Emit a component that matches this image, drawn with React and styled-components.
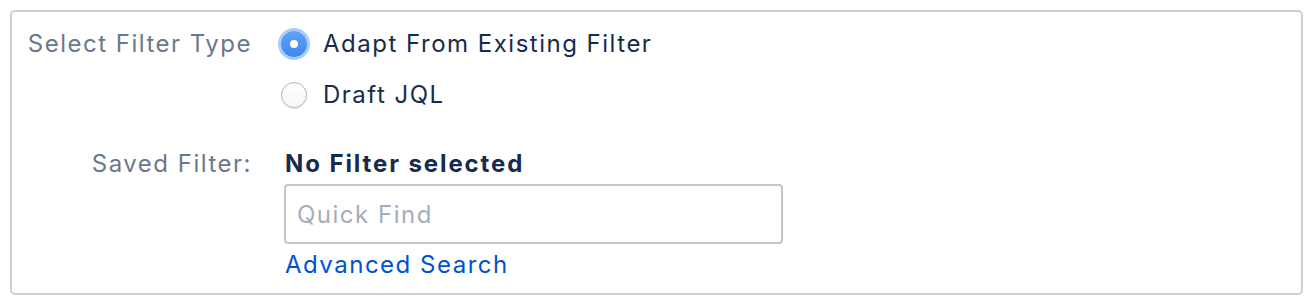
import React from "react";
import styled, { createGlobalStyle } from "styled-components";

const Global = createGlobalStyle`
  html, body { margin: 0; padding: 0; background: #fff; }
  body { font-family: Inter, "Liberation Sans", sans-serif; }
  * { box-sizing: border-box; }
`;

const Panel = styled.div`
  margin: 10px 10px 0 10px;
  width: 1293px;
  height: 285px;
  border: 2px solid #cfcfcf;
  border-radius: 5px;
  padding: 6px 0 0 0;
  display: grid;
  grid-template-columns: 240px 1fr;
  column-gap: 28px;
  align-content: start;
  font-size: 24px;
  letter-spacing: 1.5px;
  color: #172b4d;
`;

const Label = styled.div`
  text-align: right;
  color: #6b778c;
  line-height: ${(p) => p.$lh || 34}px;
  margin-top: ${(p) => p.$mt || 0}px;
`;

const Field = styled.div`
  display: flex;
  flex-direction: column;
  align-items: flex-start;
  margin-top: ${(p) => p.$mt || 0}px;
`;

const RadioRow = styled.label`
  display: flex;
  align-items: center;
  height: 51px;
  line-height: 51px;
  gap: 16px;
  color: #172b4d;
  cursor: pointer;
`;

const RadioDot = styled.span`
  position: relative;
  flex: none;
  width: 26px;
  height: 26px;
  margin-left: 1px;
  margin-top: 1px;
  border-radius: 50%;
  ${(p) =>
    p.$checked
      ? `
    background: linear-gradient(#5da2f5, #3f87ee);
    box-shadow: 0 0 0 3px #a9cbf8;
    &::after {
      content: "";
      position: absolute;
      left: 50%;
      top: 50%;
      width: 8px;
      height: 8px;
      margin: -4px 0 0 -4px;
      border-radius: 50%;
      background: #fff;
    }
  `
      : `
    background: linear-gradient(#ffffff, #f6f6f6);
    border: 1px solid #b7b7b7;
    box-shadow: 0 1px 1px rgba(0,0,0,0.12);
  `}
`;

const Value = styled.div`
  font-weight: 700;
  letter-spacing: 1.9px;
  line-height: 34px;
  margin-left: 5px;
  color: #172b4d;
`;

const Input = styled.input`
  width: 499px;
  height: 60px;
  margin-top: 3px;
  margin-left: 4px;
  border: 2px solid #c1c7d0;
  border-radius: 4px;
  padding: 0 11px;
  font-family: inherit;
  font-size: 24px;
  letter-spacing: 1.5px;
  color: #172b4d;
  outline: none;
  &::placeholder { color: #a5adba; }
`;

const Link = styled.a`
  margin-top: 4px;
  margin-left: 5px;
  line-height: 34px;
  color: #0052cc;
  text-decoration: none;
`;

export default function App() {
  return (
    <>
      <Global />
      <Panel>
        <Label $lh={51}>Select Filter Type</Label>
        <Field>
          <RadioRow>
            <RadioDot $checked />
            Adapt From Existing Filter
          </RadioRow>
          <RadioRow>
            <RadioDot />
            Draft JQL
          </RadioRow>
        </Field>
        <Label $mt={27}>Saved Filter:</Label>
        <Field $mt={27}>
          <Value>No Filter selected</Value>
          <Input placeholder="Quick Find" />
          <Link href="#">Advanced Search</Link>
        </Field>
      </Panel>
    </>
  );
}
